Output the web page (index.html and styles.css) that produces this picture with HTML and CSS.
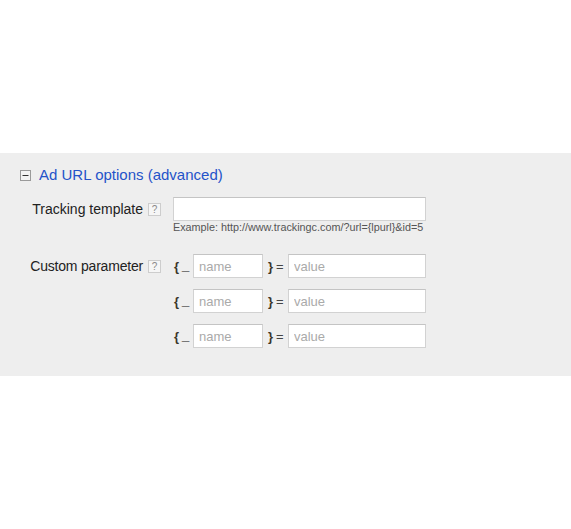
FILE: index.html
```html
<!DOCTYPE html>
<html>
<head>
<meta charset="utf-8">
<link rel="stylesheet" href="styles.css">
</head>
<body>
<div class="panel">
  <div class="heading">
    <svg class="toggle" width="11" height="11" viewBox="0 0 11 11"><rect x="0.5" y="0.5" width="10" height="10" fill="#f4f4f4" stroke="#9a9a9a"/><rect x="2.5" y="5" width="6" height="1" fill="#333"/></svg>
    <span class="heading-text">Ad URL options (advanced)</span>
  </div>
  <div class="form">
    <div class="label row-h">Tracking template</div>
    <div class="help row-h"><span class="qbox">?</span></div>
    <div class="control">
      <input class="field wide" type="text">
      <div class="example">Example: http://www.trackingc.com/?url={lpurl}&amp;id=5</div>
    </div>

    <div class="label row-h params-label narrow">Custom parameter</div>
    <div class="help row-h params-label"><span class="qbox">?</span></div>
    <div class="control params">
      <div class="param">
        <span class="brace">{</span><span class="under">_</span>
        <input class="field name" type="text" placeholder="name">
        <span class="brace close">}</span><span class="eq">=</span>
        <input class="field value" type="text" placeholder="value">
      </div>
      <div class="param">
        <span class="brace">{</span><span class="under">_</span>
        <input class="field name" type="text" placeholder="name">
        <span class="brace close">}</span><span class="eq">=</span>
        <input class="field value" type="text" placeholder="value">
      </div>
      <div class="param">
        <span class="brace">{</span><span class="under">_</span>
        <input class="field name" type="text" placeholder="name">
        <span class="brace close">}</span><span class="eq">=</span>
        <input class="field value" type="text" placeholder="value">
      </div>
    </div>
  </div>
</div>
</body>
</html>
```

FILE: styles.css
```css
html, body {
  margin: 0;
  padding: 0;
  background: #ffffff;
}
body {
  font-family: "Liberation Sans", Arial, sans-serif;
  color: #222;
}
.panel {
  margin-top: 153px;
  height: 223px;
  box-sizing: border-box;
  background: #eeeeee;
  padding: 13px 0 0 20px;
}
.heading {
  display: flex;
  align-items: center;
  height: 18px;
}
.toggle {
  display: block;
  margin-right: 8px;
}
.heading-text {
  font-size: 15px;
  color: #2453c9;
  line-height: 18px;
}
.form {
  margin-top: 13px;
  display: grid;
  grid-template-columns: 128px 13px auto;
  column-gap: 0;
  align-items: start;
}
.label {
  font-size: 14px;
  color: #222;
  text-align: right;
  padding-right: 5px;
  white-space: nowrap;
}
.narrow {
  letter-spacing: -0.2px;
}
.row-h {
  height: 24px;
  display: flex;
  align-items: center;
  justify-content: flex-end;
}
.help {
  justify-content: flex-start;
}
.qbox {
  display: flex;
  align-items: center;
  justify-content: center;
  width: 11px;
  height: 11px;
  border: 1px solid #cdcdcd;
  background: #f6f6f6;
  color: #8a8a8a;
  font-size: 10px;
  line-height: 11px;
}
.control {
  margin-left: 12px;
}
.field {
  box-sizing: border-box;
  height: 24px;
  margin: 0;
  border: 1px solid #d2d2d2;
  border-top-color: #c4c4c4;
  background: #fff;
  padding: 0 5px;
  font-family: "Liberation Sans", Arial, sans-serif;
  font-size: 13px;
  color: #222;
  outline: none;
  display: block;
}
.field::placeholder {
  color: #aaaaaa;
}
.wide {
  width: 253px;
}
.example {
  font-size: 10.8px;
  color: #555;
  line-height: 12px;
  height: 12px;
  white-space: nowrap;
}
.params-label {
  margin-top: 21px;
}
.params {
  margin-top: 21px;
  display: flex;
  flex-direction: column;
  gap: 11px;
}
.param {
  display: flex;
  align-items: center;
  height: 24px;
}
.brace {
  font-weight: bold;
  font-size: 13px;
  color: #3a3528;
  margin-left: 1px;
  width: 5px;
}
.under {
  color: #666;
  font-size: 13px;
  line-height: 16px;
  margin-left: 3px;
  margin-top: -2px;
  width: 11px;
}
.name {
  width: 70px;
}
.close {
  margin-left: 5px;
  width: 4px;
}
.eq {
  font-size: 13px;
  color: #444;
  margin-left: 4px;
  width: 12px;
}
.value {
  width: 138px;
}
```
